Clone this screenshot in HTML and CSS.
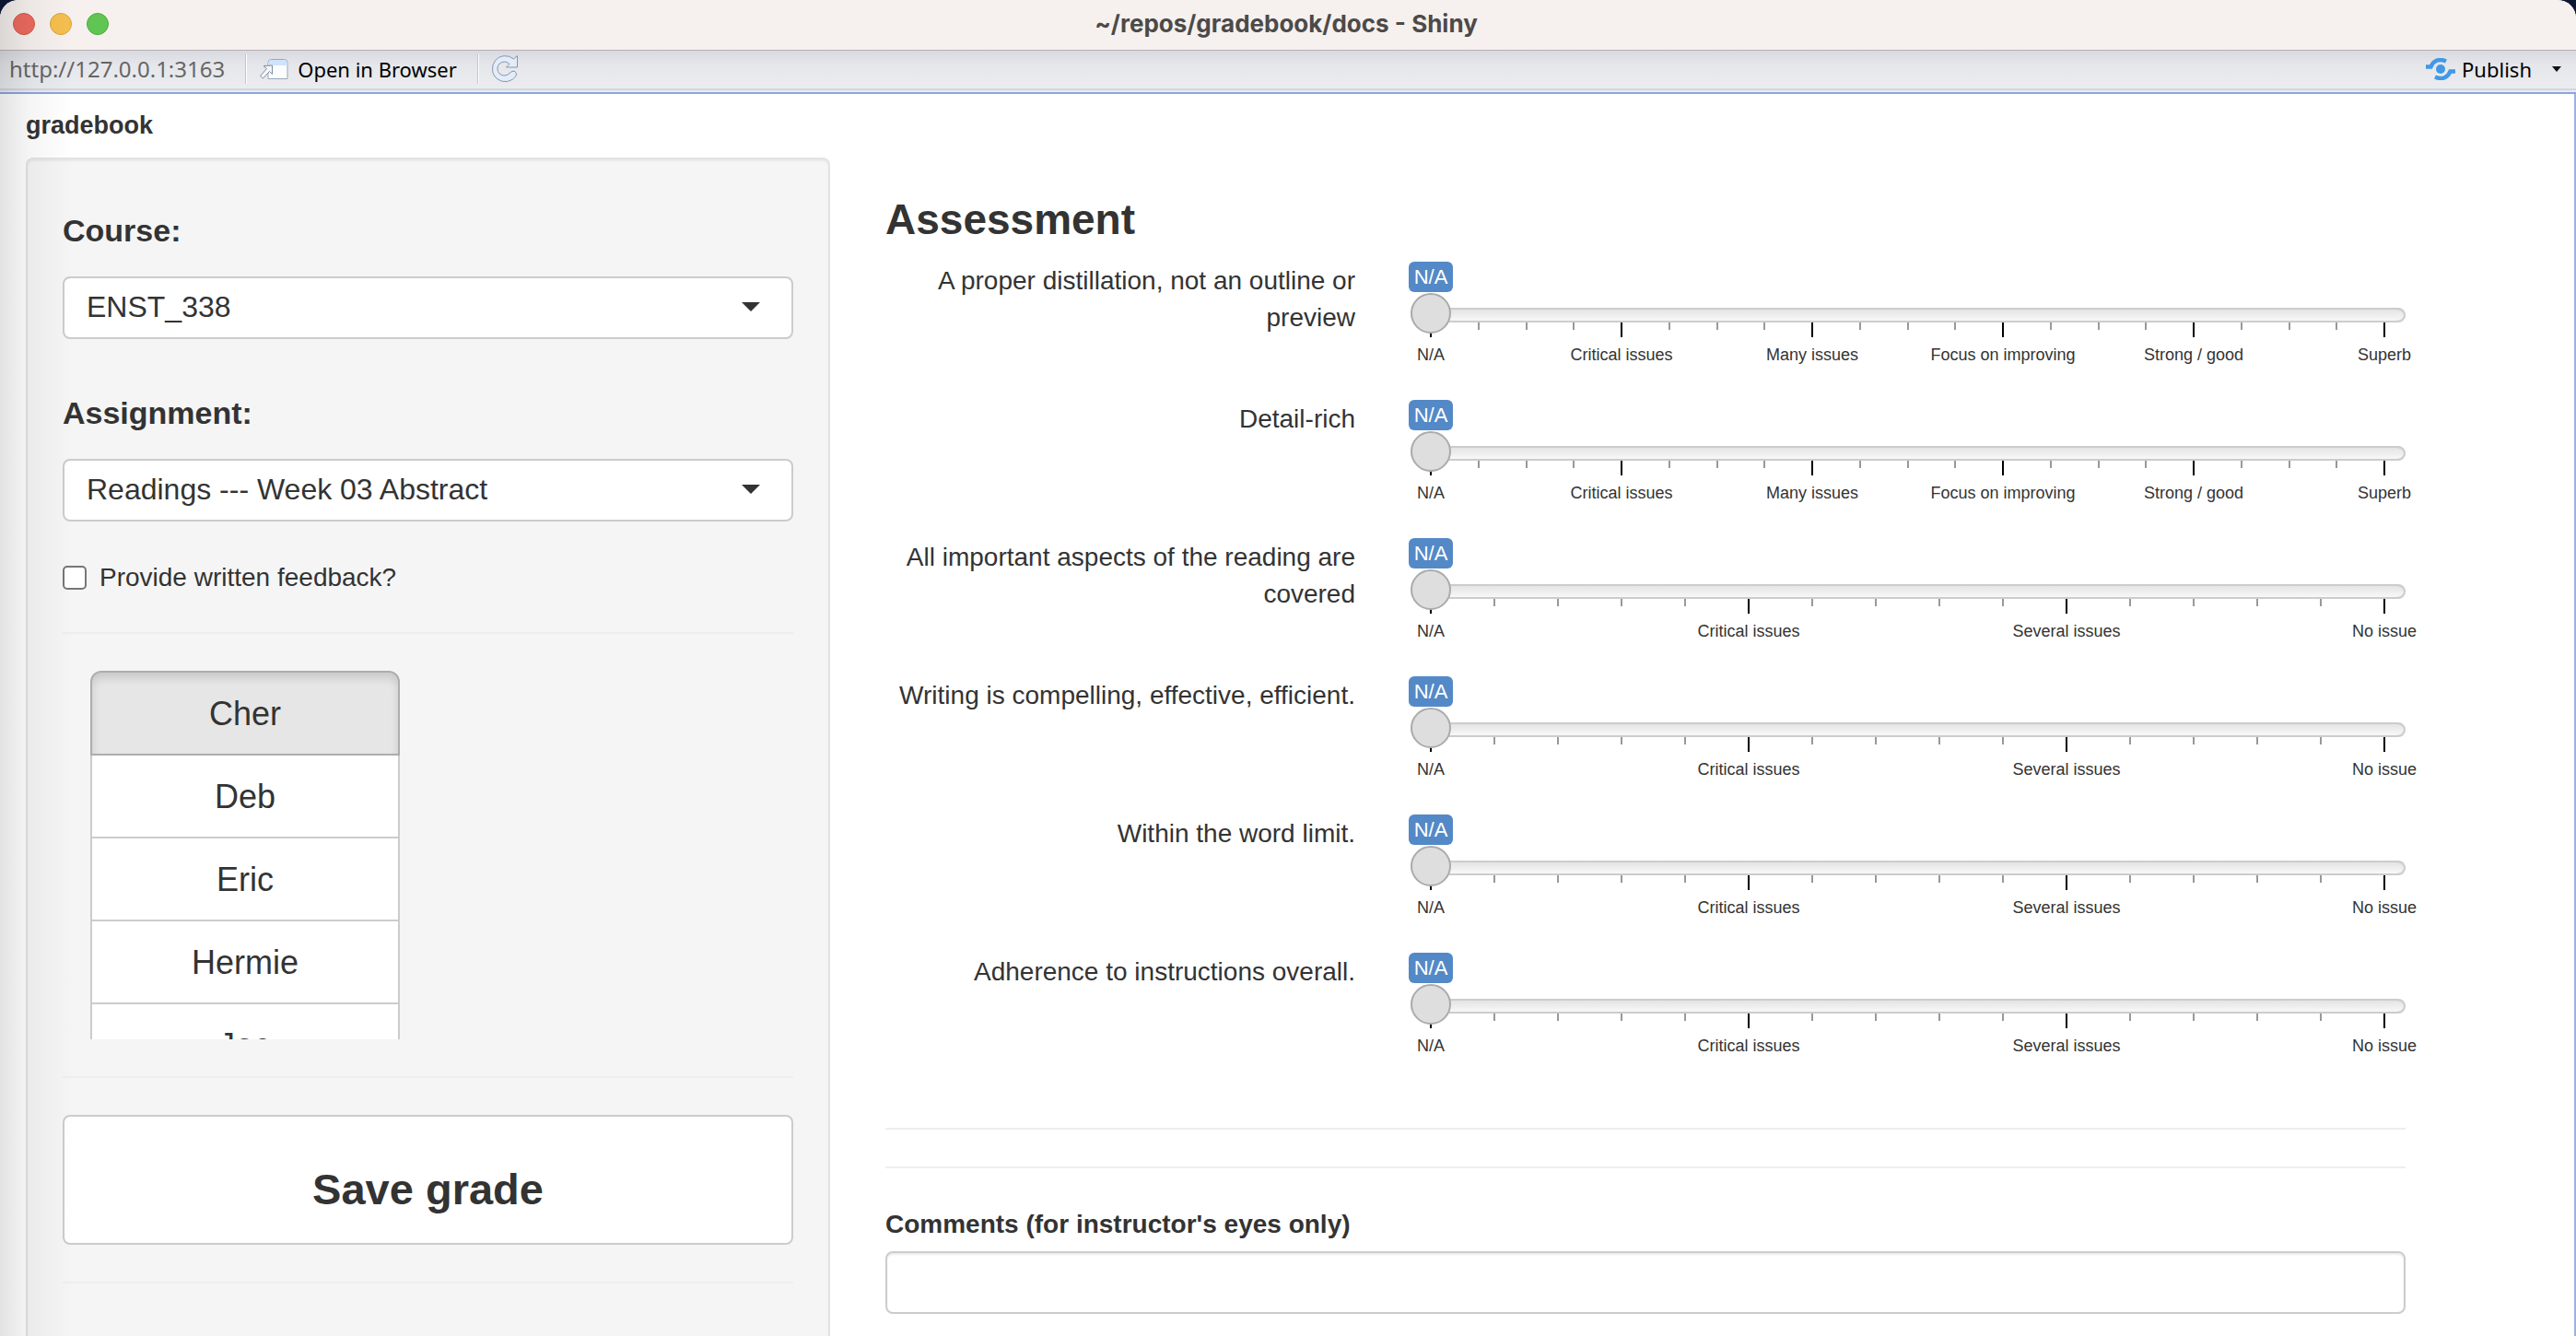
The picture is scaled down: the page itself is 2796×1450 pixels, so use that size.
FILE: index.html
```html
<!DOCTYPE html>
<html lang="en">
<head>
<meta charset="utf-8">
<meta name="viewport" content="width=device-width, initial-scale=1">
<title>~/repos/gradebook/docs - Shiny</title>
<link rel="stylesheet" href="styles.css">
</head>
<body>
<div class="window">
  <header class="titlebar">
    <div class="lights">
      <button class="light light-close" aria-label="Close"></button>
      <button class="light light-min" aria-label="Minimize"></button>
      <button class="light light-zoom" aria-label="Zoom"></button>
    </div>
    <div class="window-title">~/repos/gradebook/docs - Shiny</div>
  </header>

  <nav class="toolbar" aria-label="Viewer">
    <span class="address">http://127.0.0.1:3163</span>
    <span class="divider"></span>
    <button class="tool tool-open">
      <svg width="32" height="24" viewBox="0 0 32 24" aria-hidden="true">
        <path d="M9 22.500V5q0-3.500 3.500-3.500h14q3.500 0 3.500 3.500v17.500z" fill="#fbfcfe" stroke="#9aa8b8"/>
        <path d="M9.500 8V5q0-3 3-3h14q3 0 3 3v3z" fill="#cfe3fb"/>
        <path d="M4 8.500 13.500 8V17.500L10.500 14.500 3.500 22 .5 19.500 7.500 11.500z" fill="#f5f7fa" stroke="#7f8d9d"/>
      </svg>
      Open in Browser
    </button>
    <span class="divider"></span>
    <button class="tool tool-reload" aria-label="Reload">
      <svg width="30" height="32" viewBox="0 0 30 32" aria-hidden="true">
        <path d="M28.500 1.500V14H16.500L20 10.500A7.500 7.500 0 1 0 20 20.500Q23 17 26 18.500 28.500 20.500 27 23.500A14 14 0 1 1 24.500 5z" fill="#e3ecfa" stroke="#8796aa"/>
      </svg>
    </button>
    <button class="tool tool-publish">
      <svg width="32" height="24" viewBox="0 0 32 24" aria-hidden="true">
        <circle cx="16" cy="12" r="5" fill="#4298e6"/>
        <path d="M0 9.500h5.500C8 3 14 0 22 3.500M32 14.500h-5.500C24 21 18 24 10 20.500" fill="none" stroke="#4298e6" stroke-width="4.500"/>
      </svg>
      Publish
    </button>
    <button class="tool tool-menu" aria-label="Publish options">
      <svg width="10" height="6" viewBox="0 0 10 6" aria-hidden="true"><path d="M0 0h10L5 6z" fill="#111"/></svg>
    </button>
  </nav>

  <main class="page">
    <h1 class="app-title">gradebook</h1>
    <div class="columns">
      <form class="sidebar">
        <label class="field-label" for="course">Course:</label>
        <div class="select-wrap">
          <select id="course" class="select"><option>ENST_338</option></select>
        </div>
        <label class="field-label field-label-next" for="assignment">Assignment:</label>
        <div class="select-wrap">
          <select id="assignment" class="select"><option>Readings --- Week 03 Abstract</option></select>
        </div>
        <label class="check"><input type="checkbox" class="check-box">Provide written feedback?</label>
        <hr class="rule">
        <div class="roster" role="radiogroup" aria-label="Student">
          <label class="student"><input type="radio" name="student" class="student-radio" checked>Cher</label>
          <label class="student"><input type="radio" name="student" class="student-radio">Deb</label>
          <label class="student"><input type="radio" name="student" class="student-radio">Eric</label>
          <label class="student"><input type="radio" name="student" class="student-radio">Hermie</label>
          <label class="student"><input type="radio" name="student" class="student-radio">Joe</label>
        </div>
        <hr class="rule">
        <button type="button" class="save">Save grade</button>
        <hr class="rule">
      </form>

      <section class="assessment">
        <h2 class="section-title">Assessment</h2>

        <div class="criterion">
          <label class="criterion-label" for="c1">A proper distillation, not an outline or preview</label>
          <div class="slider">
            <div class="bubble"><output class="badge" for="c1">N/A</output></div>
            <input class="range" id="c1" type="range" min="0" max="5" value="0">
            <div class="scale"><span class="major">N/A</span><i></i><i></i><i></i><span class="major">Critical issues</span><i></i><i></i><i></i><span class="major">Many issues</span><i></i><i></i><i></i><span class="major">Focus on improving</span><i></i><i></i><i></i><span class="major">Strong / good</span><i></i><i></i><i></i><span class="major">Superb</span></div>
          </div>
        </div>

        <div class="criterion">
          <label class="criterion-label" for="c2">Detail-rich</label>
          <div class="slider">
            <div class="bubble"><output class="badge" for="c2">N/A</output></div>
            <input class="range" id="c2" type="range" min="0" max="5" value="0">
            <div class="scale"><span class="major">N/A</span><i></i><i></i><i></i><span class="major">Critical issues</span><i></i><i></i><i></i><span class="major">Many issues</span><i></i><i></i><i></i><span class="major">Focus on improving</span><i></i><i></i><i></i><span class="major">Strong / good</span><i></i><i></i><i></i><span class="major">Superb</span></div>
          </div>
        </div>

        <div class="criterion">
          <label class="criterion-label" for="c3">All important aspects of the reading are covered</label>
          <div class="slider">
            <div class="bubble"><output class="badge" for="c3">N/A</output></div>
            <input class="range" id="c3" type="range" min="0" max="3" value="0">
            <div class="scale"><span class="major">N/A</span><i></i><i></i><i></i><i></i><span class="major">Critical issues</span><i></i><i></i><i></i><i></i><span class="major">Several issues</span><i></i><i></i><i></i><i></i><span class="major">No issue</span></div>
          </div>
        </div>

        <div class="criterion">
          <label class="criterion-label" for="c4">Writing is compelling, effective, efficient.</label>
          <div class="slider">
            <div class="bubble"><output class="badge" for="c4">N/A</output></div>
            <input class="range" id="c4" type="range" min="0" max="3" value="0">
            <div class="scale"><span class="major">N/A</span><i></i><i></i><i></i><i></i><span class="major">Critical issues</span><i></i><i></i><i></i><i></i><span class="major">Several issues</span><i></i><i></i><i></i><i></i><span class="major">No issue</span></div>
          </div>
        </div>

        <div class="criterion">
          <label class="criterion-label" for="c5">Within the word limit.</label>
          <div class="slider">
            <div class="bubble"><output class="badge" for="c5">N/A</output></div>
            <input class="range" id="c5" type="range" min="0" max="3" value="0">
            <div class="scale"><span class="major">N/A</span><i></i><i></i><i></i><i></i><span class="major">Critical issues</span><i></i><i></i><i></i><i></i><span class="major">Several issues</span><i></i><i></i><i></i><i></i><span class="major">No issue</span></div>
          </div>
        </div>

        <div class="criterion">
          <label class="criterion-label" for="c6">Adherence to instructions overall.</label>
          <div class="slider">
            <div class="bubble"><output class="badge" for="c6">N/A</output></div>
            <input class="range" id="c6" type="range" min="0" max="3" value="0">
            <div class="scale"><span class="major">N/A</span><i></i><i></i><i></i><i></i><span class="major">Critical issues</span><i></i><i></i><i></i><i></i><span class="major">Several issues</span><i></i><i></i><i></i><i></i><span class="major">No issue</span></div>
          </div>
        </div>

        <hr class="rule">
        <hr class="rule">
        <label class="comments-label" for="comments">Comments (for instructor's eyes only)</label>
        <input class="comments" id="comments" type="text">
      </section>
    </div>
  </main>
</div>
</body>
</html>
```
FILE: styles.css
```css
* { box-sizing: border-box; }

body {
  margin: 0;
  background: #0d1730;
  color: #333;
  font: 28px/40px "Liberation Sans", Arial, sans-serif;
}

button, input, select { font: inherit; color: inherit; margin: 0; }

.window {
  position: relative;
  display: flex;
  flex-direction: column;
  min-height: 100vh;
  background: #fff;
  border-radius: 20px 20px 0 0;
  overflow: hidden;
}

/* Soft shade along the window's left edge */
.window::after {
  content: "";
  position: absolute;
  inset: 0 auto 0 0;
  width: 80px;
  background: linear-gradient(90deg, rgba(0, 0, 0, .11), rgba(0, 0, 0, .04) 40%, transparent);
  pointer-events: none;
  z-index: 2;
}

/* Title bar */
.titlebar {
  display: grid;
  grid-template-columns: 1fr auto 1fr;
  align-items: center;
  height: 55px;
  padding: 0 18px 2px 14px;
  background: #f6f1ee;
  border-bottom: 1px solid #b6b1b5;
}
.lights { display: flex; gap: 16px; }
.light { width: 24px; height: 24px; padding: 0; border: 1px solid; border-radius: 50%; }
.light-close { background: #ec6a5e; border-color: #d55549; }
.light-min { background: #f5bf4f; border-color: #d8a23c; }
.light-zoom { background: #61c554; border-color: #4aab3c; }
.window-title { font: bold 26px/32px Inter, sans-serif; color: #4c4a49; }

/* Viewer toolbar */
.toolbar {
  display: flex;
  align-items: center;
  height: 47px;
  padding: 0 16px 6px 10px;
  background: linear-gradient(#d9dae0, #e6e7eb 16px, #ebecf0 41px, #d2d6dd 41px, #d2d6dd 43px, #e8ecf4 43px);
  border-bottom: 2px solid #8ca6da;
  color: #000;
  font: 22px/32px "Noto Sans", sans-serif;
}
.address { color: #666; font-size: 24px; }
.divider { width: 2px; height: 32px; margin-left: 22px; background: linear-gradient(90deg, #c3c5ca 50%, #fff 50%); }
.tool { display: flex; align-items: center; gap: 9px; padding: 0; border: 0; background: none; }
.tool-open { margin-left: 14px; }
.tool-reload { margin-left: 13px; }
.tool-publish { gap: 7px; margin-left: auto; }
.tool-menu { margin-left: 22px; }

/* App page */
.page {
  flex: 1;
  display: flex;
  flex-direction: column;
  padding: 14px 0 0 28px;
  border-right: 2px solid #9db0df;
}
.app-title { margin: 0 0 15px; font-size: 27px; line-height: 40px; }
.columns {
  flex: 1;
  display: grid;
  grid-template-columns: minmax(0, 873fr) minmax(0, 1650fr);
  gap: 60px;
  padding-right: 183px;
}
.rule { margin: 40px 0; border: 0; border-top: 2px solid #eee; }

/* Sidebar */
.sidebar {
  padding: 57px 38px 16px;
  background: #f5f5f5;
  border: 2px solid #e3e3e3;
  border-bottom: 0;
  border-radius: 8px 8px 0 0;
  box-shadow: inset 0 2px 2px rgba(0, 0, 0, .05);
}
.field-label { display: block; margin-bottom: 30px; font-size: 34px; font-weight: bold; }
.field-label-next { margin-top: 60px; }
.select-wrap { position: relative; }
.select-wrap::after {
  content: "";
  position: absolute;
  top: 28px;
  right: 36px;
  border: 10px solid transparent;
  border-top-color: #333;
  border-bottom: 0;
  pointer-events: none;
}
.select {
  appearance: none;
  display: block;
  width: 100%;
  height: 68px;
  padding: 0 24px 2px;
  border: 2px solid #ccc;
  border-radius: 8px;
  background: #fff;
  font-size: 32px;
}
.check {
  display: flex;
  align-items: center;
  gap: 14px;
  height: 40px;
  margin: 40px 0;
  padding-top: 2px;
}
.check-box {
  appearance: none;
  width: 26px;
  height: 26px;
  border: 2px solid #767676;
  border-radius: 5px;
  background: #fff;
}
.check-box:checked { background: #428bca; }

.roster { height: 400px; padding-left: 30px; overflow: hidden; }
.student {
  display: flex;
  align-items: center;
  justify-content: center;
  position: relative;
  width: 336px;
  height: 92px;
  margin-bottom: -2px;
  padding-top: 2px;
  border: 2px solid #ccc;
  background: #fff;
  font-size: 36px;
}
.student:first-child { border-radius: 12px 12px 0 0; }
.student:has(:checked) {
  z-index: 1;
  border-color: #adadad;
  background: #e6e6e6;
  box-shadow: inset 0 6px 10px rgba(0, 0, 0, .125);
}
.student-radio { position: absolute; opacity: 0; }
.save {
  display: block;
  width: 100%;
  height: 141px;
  padding: 21px 24px 0;
  border: 2px solid #ccc;
  border-radius: 8px;
  background: #fff;
  font-size: 47px;
  font-weight: bold;
}

/* Assessment */
.assessment { padding-top: 42px; }
.section-title { margin: 0 0 21px; font-size: 46px; line-height: 50px; }
.criterion {
  display: grid;
  grid-template-columns: minmax(0, 510fr) minmax(0, 1080fr);
  gap: 60px;
  height: 150px;
}
.criterion-label { padding-top: 1px; text-align: right; }
.bubble { display: flex; justify-content: center; width: 44px; margin-bottom: 1px; }
.badge {
  flex: none;
  padding: 2px 6px;
  border-radius: 6px;
  background: #5489c7;
  color: #fff;
  font-size: 22px;
  line-height: 29px;
}
.range {
  appearance: none;
  display: block;
  position: relative;
  z-index: 1;
  width: 100%;
  height: 48px;
  background: none;
}
.range::-webkit-slider-runnable-track {
  height: 16px;
  border: 2px solid #ccc;
  border-width: 2px 0;
  border-radius: 16px;
  background: linear-gradient(#e4e4e4, #f8f8f8);
  box-shadow: inset -2px 0 #ccc;
}
.range::-webkit-slider-thumb {
  appearance: none;
  width: 44px;
  height: 44px;
  margin-top: -18px;
  border: 2px solid #ababab;
  border-radius: 50%;
  background: #dedede;
}
.scale {
  display: flex;
  justify-content: space-between;
  height: 44px;
  margin-top: -16px;
  padding: 0 22px 0 21px;
}
.scale i { width: 2px; height: 8px; background: #999; }
.major {
  display: flex;
  flex-direction: column;
  align-items: center;
  gap: 10px;
  width: 2px;
  font-size: 18px;
  line-height: 18px;
  white-space: nowrap;
}
.major::before { content: ""; flex: none; width: 2px; height: 16px; background: #000; }

.comments-label { display: block; margin: 41px 0 9px; font-weight: bold; }
.comments {
  display: block;
  width: 100%;
  height: 68px;
  padding: 12px 24px;
  border: 2px solid #ccc;
  border-radius: 8px;
  background: #fff;
  box-shadow: inset 0 2px 2px rgba(0, 0, 0, .075);
}
```
